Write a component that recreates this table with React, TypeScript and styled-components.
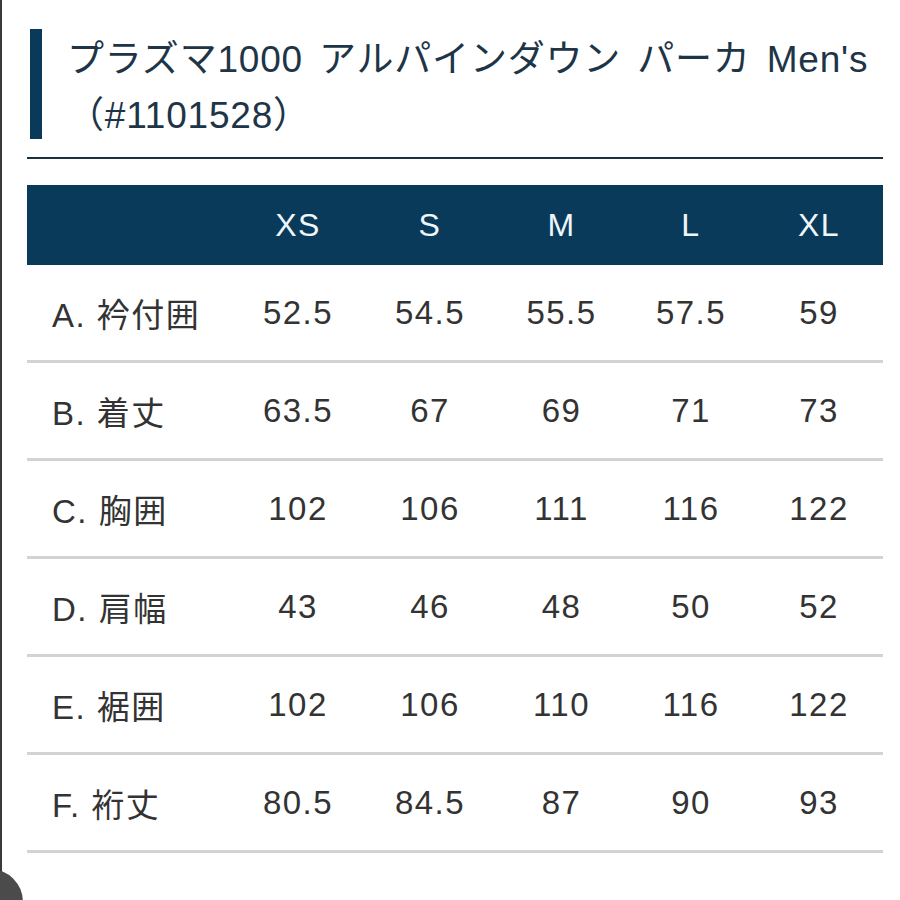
import React from "react";
import styled, {createGlobalStyle} from "styled-components";

const navy = "#0a3a5a";

const GlobalStyle = createGlobalStyle`
  html, body {
    margin: 0;
    padding: 0;
    background: #fff;
  }

  body {
    font-family: "Liberation Sans", "Noto Sans CJK JP", sans-serif;
  }
`;

const Page = styled.div`
  box-sizing: border-box;
  width: 900px;
  min-height: 900px;
  border-left: 2px solid #3a3a3a;
  padding: 29px 17px 0 25px;
`;

const TitleBlock = styled.header`
  display: flex;
  gap: 25px;
  margin-left: 3px;
`;

const AccentBar = styled.div`
  flex-shrink: 0;
  width: 12px;
  height: 110px;
  background: ${navy};
`;

const Title = styled.h1`
  margin: 0;
  padding-top: 3px;
  font-size: 37px;
  line-height: 56px;
  font-weight: 400;
  color: #1d3547;
  letter-spacing: .8px;
  word-spacing: 5px;
  white-space: nowrap;
`;

const Divider = styled.hr`
  border: 0;
  height: 2px;
  margin: 13px 0 0;
  background: #1c2f3c;
`;

const SizeTable = styled.div`
  margin-top: 26px;
`;

const Row = styled.div<{ $head?: boolean }>`
  display: grid;
  grid-template-columns: 205px 132px 132px 131px 128px 128px;
  align-items: center;
  height: ${p => (p.$head ? "80px" : "95px")};
  background: ${p => (p.$head ? navy : "transparent")};
  color: ${p => (p.$head ? "#eef6fa" : "#333")};
  border-bottom: ${p => (p.$head ? "0" : "3px solid #d3d3d3")};
`;

const Cell = styled.div<{ $label?: boolean }>`
  font-size: 33px;
  letter-spacing: 1.5px;
  text-align: ${p => (p.$label ? "left" : "center")};
  padding-left: ${p => (p.$label ? "25px" : "0")};
  white-space: nowrap;
`;

const HeadCell = styled(Cell)`
  font-size: 32px;
`;

const FloatingButton = styled.div`
  position: fixed;
  left: -43px;
  top: 869px;
  width: 66px;
  height: 66px;
  border-radius: 50%;
  background: #4b4b4b;
`;

const sizes = ["XS", "S", "M", "L", "XL"];

const rows: { label: string; values: string[] }[] = [
  { label: "A. 衿付囲", values: ["52.5", "54.5", "55.5", "57.5", "59"] },
  { label: "B. 着丈", values: ["63.5", "67", "69", "71", "73"] },
  { label: "C. 胸囲", values: ["102", "106", "111", "116", "122"] },
  { label: "D. 肩幅", values: ["43", "46", "48", "50", "52"] },
  { label: "E. 裾囲", values: ["102", "106", "110", "116", "122"] },
  { label: "F. 裄丈", values: ["80.5", "84.5", "87", "90", "93"] },
];

const App = () => {
  return (
    <>
      <GlobalStyle />
      <Page>
        <TitleBlock>
          <AccentBar />
          <Title>
            プラズマ1000 アルパインダウン パーカ Men's
            <br />
            （#1101528）
          </Title>
        </TitleBlock>
        <Divider />
        <SizeTable>
          <Row $head>
            <HeadCell $label />
            {sizes.map(size => (
              <HeadCell key={size}>{size}</HeadCell>
            ))}
          </Row>
          {rows.map(row => (
            <Row key={row.label}>
              <Cell $label>{row.label}</Cell>
              {row.values.map((value, index) => (
                <Cell key={index}>{value}</Cell>
              ))}
            </Row>
          ))}
        </SizeTable>
      </Page>
      <FloatingButton />
    </>
  );
};

export default App;
